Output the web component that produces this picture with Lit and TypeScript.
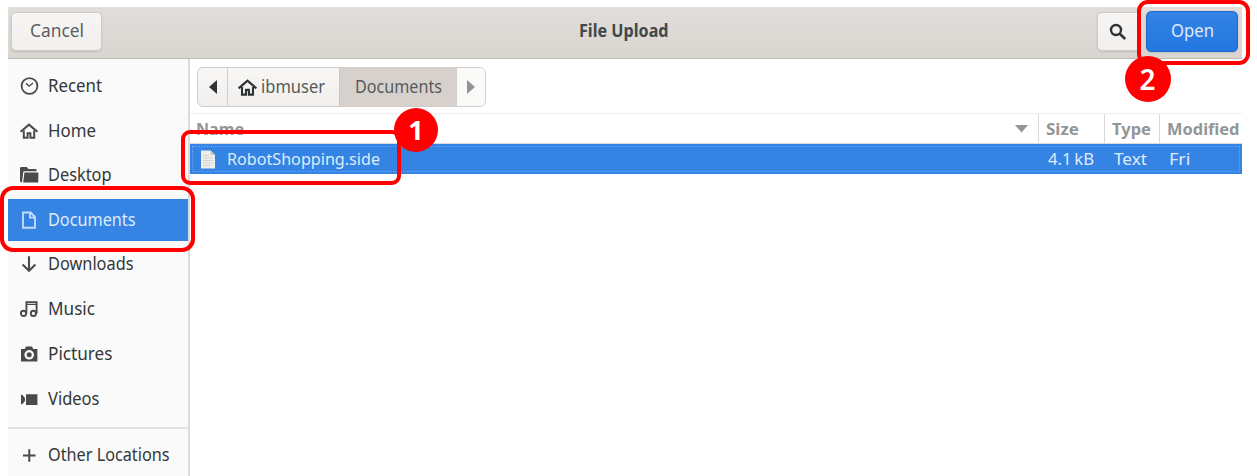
import { LitElement, html, css, svg } from "lit";
import { customElement, property } from "lit/decorators.js";

/** Single-line label condensed or expanded to a given advance width. */
@customElement("fit-text")
class FitText extends LitElement {
  @property() text = "";
  @property({ type: Number }) w = 50;
  static styles = css`
    :host { display: block; flex: none; white-space: nowrap; }
    .box { display: block; }
    .label { display: inline-block; transform-origin: 0 50%; }
  `;
  render() {
    return html`<span class="box" style="width:${this.w}px"><span class="label">${this.text}</span></span>`;
  }
  updated() {
    const label = this.renderRoot.querySelector(".label") as HTMLElement;
    const natural = label.getBoundingClientRect().width;
    if (natural) label.style.transform = `scaleX(${this.w / natural})`;
  }
}

const house = svg`<path d="M.6 9.8 9 2.6l8.4 7.2" fill="none" stroke="currentColor" stroke-width="2.1"/><path d="M3.8 8.5V15.8H7.6V11.2H10.4V15.8H14.2V8.5" fill="none" stroke="currentColor" stroke-width="2"/>`;

const icons: Record<string, unknown> = {
  recent: svg`<circle cx="9.5" cy="9" r="7.9" fill="none" stroke="currentColor" stroke-width="1.8"/><path d="M6 6.4 9.2 9.2 13 6" fill="none" stroke="currentColor" stroke-width="1.4"/>`,
  home: house,
  desktop: svg`<path d="M0 14.5V2.4Q0 1 1.4 1H6.8L8.4 3H16.4V5.2H4.2Q3.3 5.2 3.2 6.2L2 16.2H1Q0 16.2 0 14.5Z" fill="currentColor"/><path d="M4.4 6.4H18.4L18.2 16.5H3.2Z" fill="currentColor"/>`,
  documents: svg`<path d="M3 1.5H10.6L15 6V16.8H3Z M10 1.5V6.6H15" fill="none" stroke="currentColor" stroke-width="1.9"/>`,
  downloads: svg`<path d="M9 1.2V15.4M2.6 9.4 9 15.8 15.4 9.4" fill="none" stroke="currentColor" stroke-width="2.1"/>`,
  music: svg`<g fill="none" stroke="currentColor"><circle cx="3.5" cy="13.4" r="2.6" stroke-width="1.9"/><circle cx="13.4" cy="13.4" r="2.6" stroke-width="1.9"/><path d="M6.4 13.4V2.2H16.6V13.4" stroke-width="1.9"/><path d="M6.4 4.5H16.6" stroke-width="1"/></g>`,
  pictures: svg`<path fill-rule="evenodd" fill="currentColor" d="M1 4H4.8L6 1.6H12L13.2 4H17.4V16.4H1Z M9.2 5A4.8 4.8 0 1 0 9.2 14.6A4.8 4.8 0 1 0 9.2 5Z"/><circle cx="9.2" cy="9.8" r="2.5" fill="currentColor"/>`,
  videos: svg`<path fill="currentColor" d="M1 4.8H2.2L5 8.1V10.9L2.2 14.2H1Z M6 4.2H17.4V15H6Z"/>`,
  other: svg`<path d="M9.3 3.2V15.8M3 9.5H15.6" stroke="currentColor" stroke-width="2"/>`,
};

const icon = (name: string) => html`<svg class="icon" viewBox="0 0 18 18">${icons[name]}</svg>`;

const places: [string, string, number][] = [
  ["recent", "Recent", 54],
  ["home", "Home", 48],
  ["desktop", "Desktop", 63.5],
  ["documents", "Documents", 87.5],
  ["downloads", "Downloads", 85.5],
  ["music", "Music", 47],
  ["pictures", "Pictures", 64.5],
  ["videos", "Videos", 51.5],
];

@customElement("app-root")
class AppRoot extends LitElement {
  static styles = css`
    * { box-sizing: border-box; }
    :host {
      box-sizing: border-box;
      display: block; position: relative; width: 1257px; height: 476px; overflow: hidden;
      background: #fff; color: #333738; padding: 7px 15px 0 8px;
      font: 17.3px/24px "Noto Sans", "Open Sans", sans-serif;
    }
    svg { display: block; flex: none; }
    .icon { width: 18px; height: 18px; overflow: visible; }
    .window { display: flex; flex-direction: column; height: 469px; }
    .header {
      flex: none; height: 52px; display: flex; align-items: flex-start; padding: 5px 4px 0 3px;
      background: linear-gradient(#e1ddda, #d9d5d0); border-bottom: 1px solid #c0bab4;
    }
    .btn {
      height: 39px; display: flex; align-items: center; justify-content: center;
      border: 1px solid #d0cac5; border-radius: 5px; background: linear-gradient(#f7f6f5, #f1efee);
      box-shadow: 0 1px 2px rgba(0, 0, 0, 0.12);
    }
    .cancel { width: 91px; padding-bottom: 1px; color: #5b6061; }
    .title { flex: 1; display: flex; justify-content: center; padding: 7px 0 0 49px; font-weight: 700; color: #41484a; }
    .search { width: 42px; margin-right: 7px; color: #2e3436; border-radius: 5px 0 0 5px; }
    .open { width: 92px; height: 41px; margin-top: -1px; padding-bottom: 1px; color: #dfeafa; border-color: #1b6acb; background: linear-gradient(#3482e4, #2178e0); }
    .main { flex: 1; display: flex; min-height: 0; }
    .sidebar { width: 182px; flex: none; background: #fafafa; border-right: 2px solid #dbdbdb; padding-top: 5px; }
    .place { height: 44.75px; display: flex; align-items: center; padding: 0 0 1px 12px; color: #4a4a4a; }
    .place fit-text { margin-left: 10px; color: #333738; }
    .selected { height: 42px; margin: 0.75px 0 1.5px; color: #c3dafa; background: #3584e4; }
    .place.selected { padding-bottom: 0; }
    .selected fit-text { color: #dfebfb; }
    .rule { height: 2px; background: #e3e3e3; margin: 5px 0 5px; }
    .content { flex: 1; min-width: 0; display: flex; flex-direction: column; }
    .toolbar { height: 55px; flex: none; padding: 8px 7px; border-bottom: 1px solid #f0f0f0; }
    .crumbs { width: 289px; height: 40px; display: flex; border: 1.5px solid #d3cec9; border-radius: 6px; overflow: hidden; background: linear-gradient(#f8f7f6, #f1efee); }
    .crumb { display: flex; align-items: center; color: #555b5c; }
    .back { width: 30px; justify-content: center; border-right: 1px solid #d3cec9; }
    .user { width: 111px; padding-left: 10px; gap: 4px; }
    .user .icon { color: #2e3436; width: 19px; height: 19px; }
    .current { width: 118px; padding-left: 14.5px; background: #d6d1cd; border-left: 1px solid #cdc7c2; }
    .next { flex: 1; padding-left: 10px; background: #fafaf9; }
    .columns, .file { display: grid; grid-template-columns: 849px 66px 55px 82px; align-items: center; }
    .columns { height: 30px; flex: none; color: #939696; font-weight: 700; font-size: 16.5px; border-bottom: 1px solid #d9d9d9; }
    .col { display: flex; align-items: center; height: 100%; border-right: 1px solid #ddd8d6; padding-left: 6.5px; }
    .col:last-child { border-right: 0; }
    .name { justify-content: space-between; padding: 0 10px 0 6px; }
    .file { height: 30px; flex: none; color: #dfebfb; background: #3584e4; outline: 1px dotted #6ca5ec; outline-offset: -3px; font-size: 16.8px; }
    .cell { display: flex; align-items: center; padding: 0 0 0 8.5px; }
    .filename { gap: 10.5px; padding-left: 10px; }
    .mark { position: absolute; border: 4px solid #f00; border-radius: 11px; }
    .mark-place { left: 0; top: 186px; width: 195px; height: 66px; border-radius: 13px; }
    .mark-file { left: 181px; top: 130px; width: 220px; height: 55px; border-radius: 9px; }
    .mark-open { left: 1137px; top: 0; width: 113px; height: 65px; }
    .step {
      position: absolute; display: flex; align-items: center; justify-content: center; border-radius: 50%;
      color: #fff; background: #f00; font: 700 27px/30px "Noto Sans", sans-serif;
    }
    .step-one { left: 394px; top: 108px; width: 44px; height: 44px; }
    .step-two { left: 1124.5px; top: 56px; width: 46px; height: 46px; font-weight: 600; font-size: 28px; }
  `;

  render() {
    return html`
      <div class="window">
        <div class="header">
          <div class="btn cancel"><fit-text text="Cancel" .w=${54}></fit-text></div>
          <div class="title"><fit-text text="File Upload" .w=${89.5}></fit-text></div>
          <div class="btn search">
            <svg width="18" height="18" viewBox="0 0 18 18"><circle cx="7" cy="7" r="5" fill="none" stroke="currentColor" stroke-width="2.4"/><path d="M10.6 10.6 16.2 16" stroke="currentColor" stroke-width="2.7"/></svg>
          </div>
          <div class="btn open"><fit-text text="Open" .w=${43}></fit-text></div>
        </div>
        <div class="main">
          <div class="sidebar">
            ${places.map(([id, label, w]) => html`
              <div class="place ${id === "documents" ? "selected" : ""}">${icon(id)}<fit-text .text=${label} .w=${w}></fit-text></div>`)}
            <div class="rule"></div>
            <div class="place">${icon("other")}<fit-text text="Other Locations" .w=${121.5}></fit-text></div>
          </div>
          <div class="content">
            <div class="toolbar">
              <div class="crumbs">
                <div class="crumb back"><svg width="8" height="14" viewBox="0 0 8 14"><path d="M8 0V14L0 7Z" fill="#2e3436"/></svg></div>
                <div class="crumb user">${icon("home")}<fit-text text="ibmuser" .w=${64}></fit-text></div>
                <div class="crumb current"><fit-text text="Documents" .w=${87}></fit-text></div>
                <div class="crumb next"><svg width="8" height="14" viewBox="0 0 8 14"><path d="M0 0V14L8 7Z" fill="#929595"/></svg></div>
              </div>
            </div>
            <div class="columns">
              <div class="col name"><fit-text text="Name" .w=${48}></fit-text><svg width="13" height="8" viewBox="0 0 13 8"><path d="M0 0H13L6.5 7.5Z" fill="#929595"/></svg></div>
              <div class="col"><fit-text text="Size" .w=${33}></fit-text></div>
              <div class="col"><fit-text text="Type" .w=${39}></fit-text></div>
              <div class="col"><fit-text text="Modified" .w=${72.5}></fit-text></div>
            </div>
            <div class="file">
              <div class="cell filename">
                <svg width="16" height="19" viewBox="0 0 16 19"><path d="M1 .5H10.5L15 5V18.5H1Z" fill="#eeeeec"/><path d="M10.5 .5V5H15Z" fill="#c8c9c5"/><path d="M3 5.5H9M3 8H13M3 10.5H13M3 13H13M3 15.5H10" stroke="#d3d4cf"/></svg>
                <fit-text text="RobotShopping.side" .w=${153}></fit-text>
              </div>
              <div class="cell"><fit-text text="4.1&#8201;kB" .w=${46}></fit-text></div>
              <div class="cell"><fit-text text="Text" .w=${33}></fit-text></div>
              <div class="cell"><fit-text text="Fri" .w=${21.5}></fit-text></div>
            </div>
          </div>
        </div>
      </div>
      <div class="mark mark-place"></div>
      <div class="mark mark-file"></div>
      <div class="mark mark-open"></div>
      <div class="step step-one">1</div>
      <div class="step step-two">2</div>
    `;
  }
}
